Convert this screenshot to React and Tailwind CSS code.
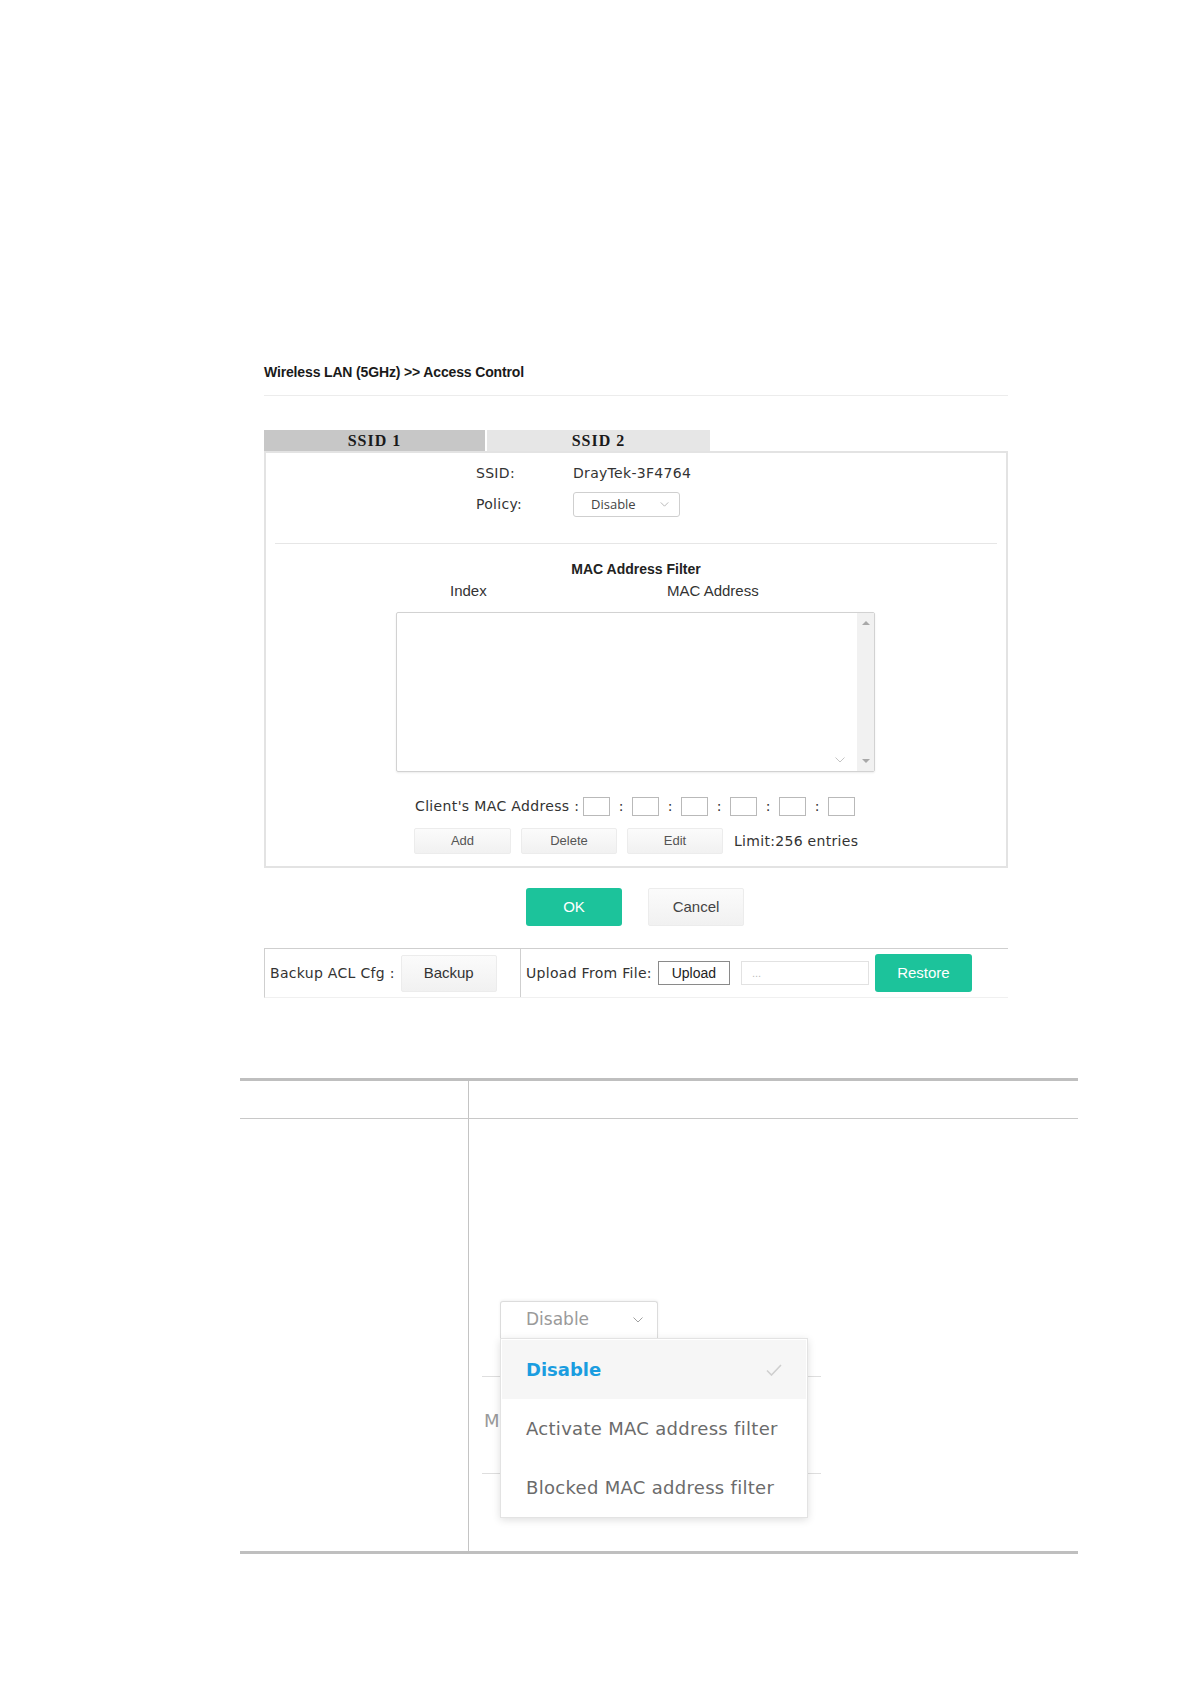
import React from "react";

const V = "font-['DejaVu_Sans',sans-serif]";
const A = "font-['Liberation_Sans',Arial,sans-serif]";

function Chevron({ className = "" }) {
  return (
    <svg viewBox="0 0 10 6" className={className} fill="none" stroke="currentColor" strokeWidth="1">
      <polyline points="0.5,0.5 5,5 9.5,0.5" />
    </svg>
  );
}

function MacBox() {
  return <div className="w-[27px] h-[19px] border border-[#b9b9b9] bg-white" />;
}

function GrayBtn({ children, className = "" }) {
  return (
    <div
      className={`flex items-center justify-center border border-[#ececec] rounded-[2px] bg-gradient-to-b from-[#fbfbfb] to-[#f1f1f1] text-[#555] ${A} ${className}`}
    >
      {children}
    </div>
  );
}

export default function App() {
  return (
    <div className="w-[1190px] h-[1684px] bg-white relative overflow-hidden">
      {/* top web UI section */}
      <div className="pt-[362px] pl-[264px]">
        <div className="w-[744px]">
          <div className={`h-[20px] leading-[20px] text-[14px] font-bold tracking-[-0.15px] text-[#1a1a1a] ${A}`}>
            Wireless LAN (5GHz) &gt;&gt; Access Control
          </div>
          <div className="mt-[13px] h-px bg-[#ececec]" />

          {/* tabs */}
          <div className="mt-[34px] flex gap-[2px]">
            <div className="w-[221px] h-[21px] bg-[#c7c7c7] text-center leading-[21px] text-[16px] font-bold tracking-[1px] text-[#1a1a1a] font-['Liberation_Serif',serif]">
              SSID 1
            </div>
            <div className="w-[223px] h-[21px] bg-[#e6e6e6] text-center leading-[21px] text-[16px] font-bold tracking-[1px] text-[#1a1a1a] font-['Liberation_Serif',serif]">
              SSID 2
            </div>
          </div>

          {/* panel */}
          <div className="border-2 border-[#e3e3e3] pb-[12px]">
            <div className={`mt-[8px] h-[24px] flex items-center pl-[210px] text-[14px] tracking-[0.3px] text-[#333] ${V}`}>
              <span className="w-[97px]">SSID:</span>
              <span>DrayTek-3F4764</span>
            </div>
            <div className={`mt-[7px] h-[25px] flex items-center pl-[210px] text-[14px] tracking-[0.3px] text-[#333] ${V}`}>
              <span className="w-[97px]">Policy:</span>
              <div className="w-[107px] h-[25px] border border-[#cfcfcf] rounded-[3px] flex items-center pl-[17px] pr-[10px] justify-between tracking-normal">
                <span className="text-[13px] text-[#444] font-['Open_Sans',sans-serif]">Disable</span>
                <Chevron className="w-[9px] h-[5px] text-[#aaa]" />
              </div>
            </div>
            <div className="mt-[26px] mx-[9px] h-px bg-[#e6e6e6]" />
            <div className={`mt-[16px] h-[18px] leading-[18px] text-center text-[14px] font-bold text-[#222] ${A}`}>
              MAC Address Filter
            </div>
            <div className={`mt-[4px] h-[18px] leading-[18px] flex pl-[184px] text-[15px] text-[#333] ${A}`}>
              <span className="w-[217px]">Index</span>
              <span>MAC Address</span>
            </div>

            {/* list box */}
            <div className="mt-[12px] ml-[130px] w-[479px] h-[160px] border border-[#d2d2d2] rounded-[2px] shadow-[0_1px_2px_rgba(0,0,0,0.08)] flex">
              <div className="flex-1 relative">
                <Chevron className="absolute right-[12px] bottom-[8px] w-[10px] h-[6px] text-[#c4c4c4]" />
              </div>
              <div className="w-[17px] bg-[#f1f1f1] flex flex-col items-center justify-between py-[8px]">
                <div className="w-0 h-0 border-l-[4px] border-r-[4px] border-b-[4px] border-l-transparent border-r-transparent border-b-[#a8a8a8]" />
                <div className="w-0 h-0 border-l-[4px] border-r-[4px] border-t-[4px] border-l-transparent border-r-transparent border-t-[#a8a8a8]" />
              </div>
            </div>

            {/* client's mac */}
            <div className={`mt-[24px] h-[20px] flex items-center pl-[149px] text-[14px] tracking-[0.35px] text-[#333] ${V}`}>
              <span className="mr-[4px]">Client's MAC Address :</span>
              <MacBox />
              <span className="w-[22px] text-center">:</span>
              <MacBox />
              <span className="w-[22px] text-center">:</span>
              <MacBox />
              <span className="w-[22px] text-center">:</span>
              <MacBox />
              <span className="w-[22px] text-center">:</span>
              <MacBox />
              <span className="w-[22px] text-center">:</span>
              <MacBox />
            </div>

            <div className="mt-[12px] flex items-center pl-[148px] gap-[10px]">
              <GrayBtn className="w-[97px] h-[26px] text-[13px]">Add</GrayBtn>
              <GrayBtn className="w-[96px] h-[26px] text-[13px]">Delete</GrayBtn>
              <GrayBtn className="w-[96px] h-[26px] text-[13px]">Edit</GrayBtn>
              <span className={`ml-[1px] text-[14px] tracking-[0.3px] text-[#333] ${V}`}>Limit:256 entries</span>
            </div>
          </div>

          {/* OK / Cancel */}
          <div className="mt-[20px] flex pl-[262px] gap-[26px]">
            <div className={`w-[96px] h-[38px] rounded-[3px] bg-[#1cc39b] text-white text-[15px] flex items-center justify-center ${A}`}>
              OK
            </div>
            <GrayBtn className="w-[96px] h-[38px] text-[15px] !text-[#444]">Cancel</GrayBtn>
          </div>

          {/* backup row */}
          <div className="mt-[22px] h-[50px] border-t border-t-[#cfcfcf] border-l border-l-[#cfcfcf] border-b border-b-[#f0f0f0] flex">
            <div className="w-[256px] border-r border-r-[#cfcfcf] flex items-center pl-[5px]">
              <span className={`text-[14px] tracking-[0.3px] text-[#333] ${V}`}>Backup ACL Cfg :</span>
              <GrayBtn className="ml-[6px] w-[96px] h-[37px] text-[15px] !text-[#333]">Backup</GrayBtn>
            </div>
            <div className="flex items-center pl-[5px]">
              <span className={`text-[14px] tracking-[0.3px] text-[#333] ${V}`}>Upload From File:</span>
              <div className={`ml-[6px] w-[72px] h-[24px] border border-[#8a8a8a] bg-white flex items-center justify-center text-[14px] text-[#222] ${A}`}>
                Upload
              </div>
              <div className={`ml-[11px] w-[128px] h-[24px] border border-[#e2e2e2] flex items-center pl-[10px] text-[11px] text-[#bbb] ${A}`}>
                ...
              </div>
              <div className={`ml-[6px] w-[97px] h-[38px] rounded-[3px] bg-[#1cc39b] text-white text-[15px] flex items-center justify-center ${A}`}>
                Restore
              </div>
            </div>
          </div>
        </div>
      </div>

      {/* document table */}
      <div className="mt-[80px] ml-[240px] w-[838px]">
        <div className="h-[3px] bg-[#bfbfbf]" />
        <div className="flex h-[38px] border-b border-b-[#c8c8c8]">
          <div className="w-[229px] border-r border-r-[#c4c4c4]" />
          <div className="flex-1" />
        </div>
        <div className="flex h-[432px]">
          <div className="w-[229px] border-r border-r-[#c4c4c4]" />
          <div className="flex-1 pt-[182px] pl-[31px]">
            <div className="relative w-[308px]">
              {/* background fragments of the pasted screenshot */}
              <div className="absolute left-[-18px] top-[75px] w-[339px] h-px bg-[#dedede]" />
              <div className="absolute left-[-18px] top-[172px] w-[339px] h-px bg-[#dedede]" />
              <div className={`absolute left-[-16px] top-[110px] text-[18px] leading-[20px] text-[#9a9a9a] ${V}`}>M</div>

              {/* select */}
              <div className="relative z-10 w-[158px] h-[37px] bg-white border border-b-0 border-[#dcdcdc] rounded-t-[3px] shadow-[0_-1px_3px_rgba(0,0,0,0.06)] flex items-center pl-[25px] pr-[14px] justify-between">
                <span className={`text-[17px] text-[#9a9a9a] ${V}`}>Disable</span>
                <Chevron className="w-[10px] h-[6px] text-[#a0a0a0]" />
              </div>
              {/* menu */}
              <div className="relative z-10 w-[308px] h-[180px] bg-white border border-[#e3e3e3] shadow-[0_2px_8px_rgba(0,0,0,0.13)] p-[1px]">
                <div className="h-[59px] bg-[#f6f6f6] flex items-center justify-between pl-[24px] pr-[24px]">
                  <span className={`text-[18px] font-bold text-[#1a9de0] ${V}`}>Disable</span>
                  <svg viewBox="0 0 16 12" className="w-[16px] h-[12px]" fill="none" stroke="#cfcfcf" strokeWidth="1.6">
                    <polyline points="1,6.5 5.5,11 15,1" />
                  </svg>
                </div>
                <div className={`h-[58px] flex items-center pl-[24px] text-[18px] text-[#6b6b6b] tracking-[0.3px] ${V}`}>
                  Activate MAC address filter
                </div>
                <div className={`h-[60px] flex items-center pl-[24px] text-[18px] text-[#6b6b6b] tracking-[0.3px] ${V}`}>
                  Blocked MAC address filter
                </div>
              </div>
            </div>
          </div>
        </div>
        <div className="h-[3px] bg-[#bfbfbf]" />
      </div>
    </div>
  );
}
